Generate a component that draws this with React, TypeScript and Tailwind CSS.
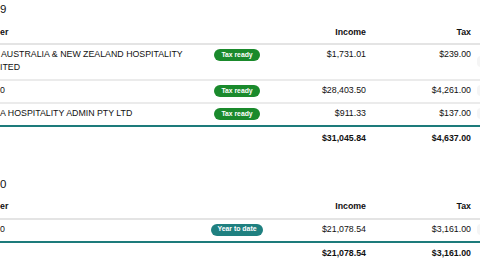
import React from "react";

type Row = {
  name: React.ReactNode;
  badge: "ready" | "ytd";
  income: string;
  tax: string;
};

function Badge({ kind }: { kind: "ready" | "ytd" }) {
  if (kind === "ready") {
    return (
      <span className="mt-[1px] inline-flex h-[12px] items-center rounded-full bg-[#1a8a2c] px-[7px] text-[6.8px] font-bold leading-none text-white">
        Tax ready
      </span>
    );
  }
  return (
    <span className="mt-[1px] inline-flex h-[12px] items-center rounded-full bg-[#1f8080] px-[6px] text-[6.9px] font-bold leading-none text-white">
      Year to date
    </span>
  );
}

function Section({
  title,
  rows,
  totalIncome,
  totalTax,
  className,
}: {
  title: string;
  rows: Row[];
  totalIncome: string;
  totalTax: string;
  className?: string;
}) {
  return (
    <section className={className}>
      <h2 className="pt-[2px] text-[11.5px] leading-[14px]">{title}</h2>
      <div className="mt-[9.5px] flex border-b-2 border-[#e4e4e4] pb-[4.5px] font-bold">
        <div className="w-[200px] shrink-0">er</div>
        <div className="w-[74px] shrink-0" />
        <div className="w-[92px] shrink-0 text-right">Income</div>
        <div className="w-[105px] shrink-0 text-right">Tax</div>
      </div>
      {rows.map((r, i) => (
        <div
          key={i}
          className={
            "flex items-start pt-[3px] pb-[5px] border-b-2 " +
            (i === rows.length - 1 ? "border-[#1d7b7b]" : "border-[#ebebeb]")
          }
        >
          <div className="w-[200px] shrink-0">{r.name}</div>
          <div className="flex w-[74px] shrink-0 justify-center">
            <Badge kind={r.badge} />
          </div>
          <div className="w-[92px] shrink-0 text-right">{r.income}</div>
          <div className="w-[105px] shrink-0 text-right">{r.tax}</div>
          <div className="ml-[6px] h-[11px] w-[20px] shrink-0 self-center rounded-sm bg-[#f5f5f5]" />
        </div>
      ))}
      <div className="flex pt-[4.5px] font-bold">
        <div className="w-[200px] shrink-0" />
        <div className="w-[74px] shrink-0" />
        <div className="w-[92px] shrink-0 text-right">{totalIncome}</div>
        <div className="w-[105px] shrink-0 text-right">{totalTax}</div>
      </div>
    </section>
  );
}

export default function App() {
  return (
    <div className="h-[270px] w-[480px] overflow-hidden bg-white font-['Liberation_Sans',Arial,sans-serif] text-[8.8px] leading-[13px] text-[#111111]">
      <Section
        title="9"
        className="mb-[30px]"
        rows={[
          {
            name: (
              <>
                <span className="ml-[1px]">AUSTRALIA &amp; NEW ZEALAND HOSPITALITY</span>
                <br />
                ITED
              </>
            ),
            badge: "ready",
            income: "$1,731.01",
            tax: "$239.00",
          },
          {
            name: "0",
            badge: "ready",
            income: "$28,403.50",
            tax: "$4,261.00",
          },
          {
            name: "A HOSPITALITY ADMIN PTY LTD",
            badge: "ready",
            income: "$911.33",
            tax: "$137.00",
          },
        ]}
        totalIncome="$31,045.84"
        totalTax="$4,637.00"
      />
      <Section
        title="0"
        rows={[
          {
            name: "0",
            badge: "ytd",
            income: "$21,078.54",
            tax: "$3,161.00",
          },
        ]}
        totalIncome="$21,078.54"
        totalTax="$3,161.00"
      />
    </div>
  );
}
